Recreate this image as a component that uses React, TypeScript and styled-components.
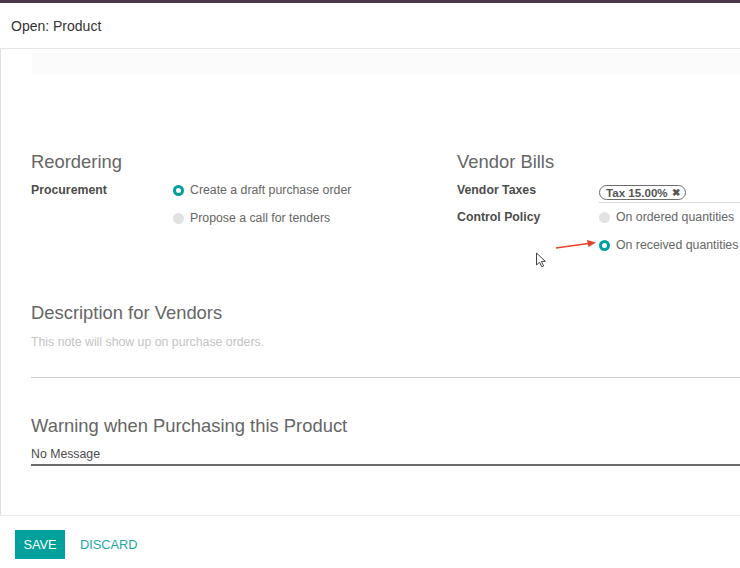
import styled, { createGlobalStyle } from "styled-components";

const GlobalStyle = createGlobalStyle`
    html, body {
        margin: 0;
        padding: 0;
        background: #fff;
    }
    body {
        font-family: "Liberation Sans", Arial, sans-serif;
        color: #4c4c4c;
    }
`;

const Dialog = styled.div`
    position: relative;
    width: 740px;
    height: 568px;
    overflow: hidden;
    background: #fff;
    display: flex;
    flex-direction: column;
`;

const TopStrip = styled.div`
    height: 3px;
    background: #4a3848;
`;

const Header = styled.div`
    height: 45px;
    display: flex;
    align-items: center;
    padding-left: 11px;
    font-size: 14px;
    color: #333;
    border-bottom: 1px solid #e6e6e6;
`;

const Body = styled.div`
    height: 466px;
    overflow: hidden;
    padding: 4px 0 0 30px;
    border-left: 1px solid #e0e0e0;
    box-sizing: border-box;
`;

const FaintBox = styled.div`
    height: 22px;
    margin-left: 1px;
    background: #fbfbfb;
`;

const Columns = styled.div`
    display: grid;
    grid-template-columns: 426px 1fr;
    margin-top: 76px;
`;

const Group = styled.div`
    display: flex;
    flex-direction: column;
`;

const Heading = styled.div`
    font-size: 18.4px;
    line-height: 22px;
    color: #666;
    margin-bottom: 3px;
    white-space: nowrap;
`;

const Row = styled.div<{ $h?: number }>`
    display: grid;
    grid-template-columns: 142px 1fr;
    align-items: start;
    min-height: ${(p) => p.$h ?? 28}px;
`;

const Label = styled.div<{ $pad?: number; $lh?: number }>`
    font-size: 12.3px;
    font-weight: bold;
    color: #4c4c4c;
    padding-top: ${(p) => p.$pad ?? 0}px;
    line-height: ${(p) => p.$lh ?? 28}px;
`;

const Options = styled.div`
    display: flex;
    flex-direction: column;
`;

const Option = styled.div`
    display: flex;
    align-items: center;
    height: 28px;
    font-size: 12.3px;
    color: #666;
    white-space: nowrap;
    gap: 6px;
`;

const Radio = styled.span<{ $on?: boolean }>`
    width: 11px;
    height: 11px;
    border-radius: 50%;
    box-sizing: border-box;
    background: ${(p) => (p.$on ? "#fff" : "#e2e2e2")};
    border: ${(p) => (p.$on ? "3.5px solid #00a09d" : "none")};
    flex-shrink: 0;
`;

const TagField = styled.div`
    padding: 7px 0 1px;
    border-bottom: 1px solid #d6d6d6;
`;

const Tag = styled.span`
    display: inline-flex;
    align-items: center;
    gap: 4px;
    height: 15px;
    padding: 0 5px 0 6px;
    border: 1.5px solid #6d6d6d;
    border-radius: 8px;
    box-sizing: border-box;
    font-size: 11.6px;
    font-weight: bold;
    color: #555;
`;

const TagRemove = styled.span`
    font-size: 10px;
    color: #555;
`;

const Section = styled.div<{ $top: number }>`
    margin-top: ${(p) => p.$top}px;
`;

const Placeholder = styled.div`
    margin-top: 8px;
    font-size: 12.3px;
    line-height: 20px;
    color: #c4c4c4;
    padding-bottom: 25px;
    border-bottom: 1px solid #cfcfcf;
`;

const SelectField = styled.div`
    margin-top: 7px;
    font-size: 12.3px;
    line-height: 20px;
    color: #4c4c4c;
    border-bottom: 2px solid #6b6b6b;
`;

const Footer = styled.div`
    flex: 1;
    border-top: 1px solid #eaeaea;
    display: flex;
    align-items: flex-start;
    padding: 14px 15px 0;
    gap: 15px;
`;

const SaveButton = styled.button`
    height: 29px;
    width: 50px;
    padding: 0;
    border: none;
    background: #00a09d;
    color: #fff;
    font-family: "Liberation Sans", Arial, sans-serif;
    font-size: 12.8px;
`;

const LinkButton = styled.button`
    height: 29px;
    padding: 0;
    border: none;
    background: none;
    color: #1da8a5;
    font-family: "Liberation Sans", Arial, sans-serif;
    font-size: 12.8px;
`;

const Overlay = styled.svg<{ $x: number; $y: number }>`
    position: absolute;
    left: ${(p) => p.$x}px;
    top: ${(p) => p.$y}px;
    pointer-events: none;
`;

export default function App() {
    return (
        <>
            <GlobalStyle />
            <Dialog>
                <TopStrip />
                <Header>Open: Product</Header>
                <Body>
                    <FaintBox />
                    <Columns>
                        <Group>
                            <Heading>Reordering</Heading>
                            <Row>
                                <Label>Procurement</Label>
                                <Options>
                                    <Option>
                                        <Radio $on />
                                        Create a draft purchase order
                                    </Option>
                                    <Option>
                                        <Radio />
                                        Propose a call for tenders
                                    </Option>
                                </Options>
                            </Row>
                        </Group>
                        <Group>
                            <Heading>Vendor Bills</Heading>
                            <Row $h={24}>
                                <Label $pad={3} $lh={22}>
                                    Vendor Taxes
                                </Label>
                                <TagField>
                                    <Tag>
                                        Tax 15.00% <TagRemove>✖</TagRemove>
                                    </Tag>
                                </TagField>
                            </Row>
                            <Row>
                                <Label>Control Policy</Label>
                                <Options>
                                    <Option>
                                        <Radio />
                                        On ordered quantities
                                    </Option>
                                    <Option>
                                        <Radio $on />
                                        On received quantities
                                    </Option>
                                </Options>
                            </Row>
                        </Group>
                    </Columns>
                    <Section $top={43}>
                        <Heading>Description for Vendors</Heading>
                        <Placeholder>This note will show up on purchase orders.</Placeholder>
                    </Section>
                    <Section $top={37}>
                        <Heading>Warning when Purchasing this Product</Heading>
                        <SelectField>No Message</SelectField>
                    </Section>
                </Body>
                <Footer>
                    <SaveButton>SAVE</SaveButton>
                    <LinkButton>DISCARD</LinkButton>
                </Footer>
                <Overlay $x={554} $y={238} width={44} height={14} viewBox="0 0 44 14">
                    <line x1="2" y1="10" x2="34" y2="5.5" stroke="#e8412c" strokeWidth="1.5" />
                    <polygon points="42,4.5 33,2 34.5,9" fill="#e8412c" />
                </Overlay>
                <Overlay $x={535} $y={252} width={12} height={16} viewBox="0 0 12 16">
                    <path
                        d="M1.5 1 L1.5 13 L4.5 10.2 L6.8 14.8 L8.6 14 L6.4 9.4 L10.4 9.4 Z"
                        fill="#fff"
                        stroke="#444"
                        strokeWidth="1"
                        strokeLinejoin="round"
                    />
                </Overlay>
            </Dialog>
        </>
    );
}
